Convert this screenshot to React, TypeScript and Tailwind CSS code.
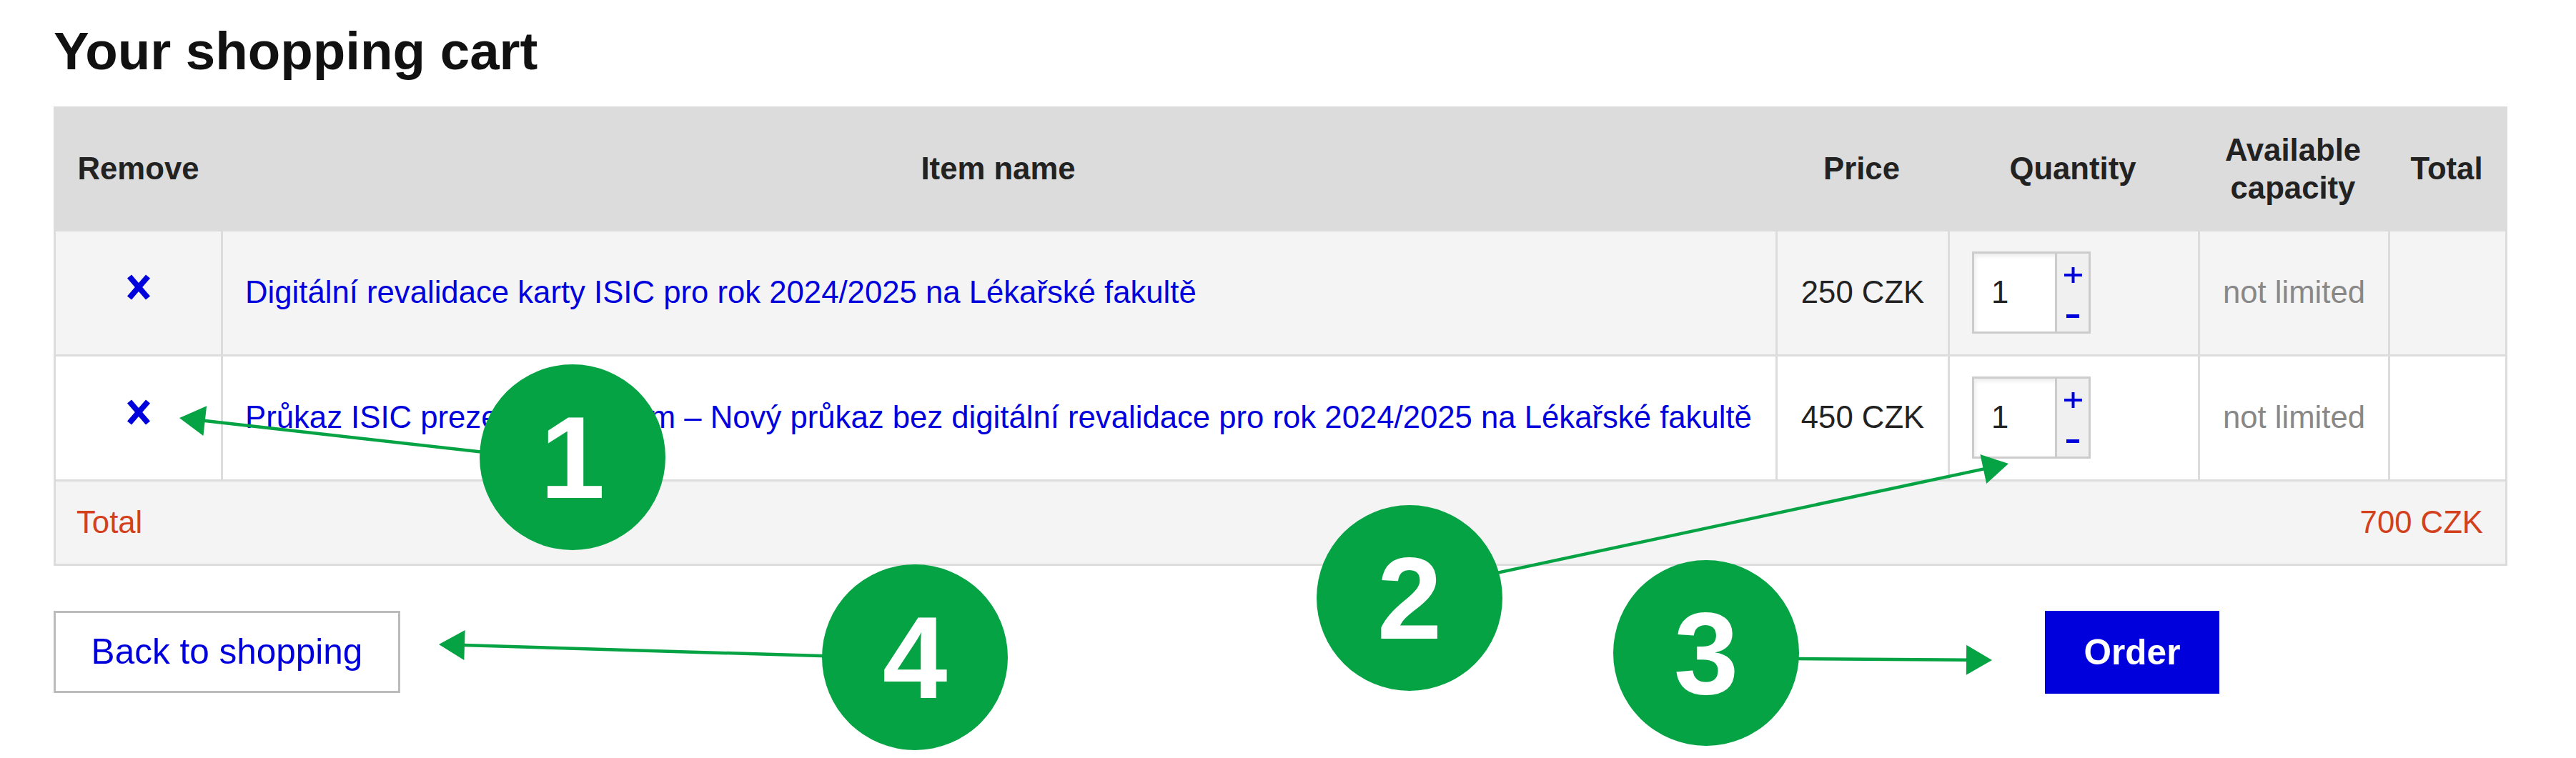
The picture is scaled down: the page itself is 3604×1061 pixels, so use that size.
import React from "react";

const GREEN = "#05a344";

type Pt = [number, number];

function arrowHead(tip: Pt, tail: Pt, len = 36, hw = 21) {
  const dx = tail[0] - tip[0];
  const dy = tail[1] - tip[1];
  const d = Math.hypot(dx, dy);
  const ux = dx / d;
  const uy = dy / d;
  const bx = tip[0] + ux * len;
  const by = tip[1] + uy * len;
  const px = -uy;
  const py = ux;
  return {
    points: `${tip[0]},${tip[1]} ${bx + px * hw},${by + py * hw} ${bx - px * hw},${by - py * hw}`,
    base: [bx + ux * -2, by + uy * -2] as Pt,
  };
}

const arrows: { tip: Pt; tail: Pt }[] = [
  { tip: [251, 585], tail: [801, 647] },
  { tip: [2810, 649], tail: [1972, 828] },
  { tip: [2787, 924], tail: [2387, 921] },
  { tip: [614, 902], tail: [1280, 922] },
];

const circles = [
  { cx: 801, cy: 640, n: "1" },
  { cx: 1972, cy: 837, n: "2" },
  { cx: 2387, cy: 914, n: "3" },
  { cx: 1280, cy: 920, n: "4" },
];

function RemoveX() {
  return (
    <svg width="36" height="38" viewBox="0 0 36 38" className="mb-[16px]">
      <line x1="5" y1="4" x2="31" y2="34" stroke="#0000dd" strokeWidth="8" />
      <line x1="31" y1="4" x2="5" y2="34" stroke="#0000dd" strokeWidth="8" />
    </svg>
  );
}

function QtyInput() {
  return (
    <div className="flex w-[166px] h-[115px] border-[3px] border-[#cccccc]">
      <div className="w-[113px] h-full bg-white shadow-[inset_2px_4px_5px_rgba(0,0,0,0.07)] flex items-center pl-[24px] text-[#222]">
        1
      </div>
      <div className="flex-1 border-l-[3px] border-[#cccccc] bg-[#f0f0f0] flex flex-col items-center justify-between pt-[19px] pb-[18px]">
        <svg width="25" height="22" viewBox="0 0 25 22">
          <rect x="10.5" y="0" width="4" height="22" fill="#0000dd" />
          <rect x="0" y="9" width="25" height="4" fill="#0000dd" />
        </svg>
        <svg width="22" height="7" viewBox="0 0 22 7">
          <rect x="2" y="1" width="18" height="5" fill="#0000dd" />
        </svg>
      </div>
    </div>
  );
}

const COLS = "grid grid-cols-[231px_2175px_241px_350px_266px_164px]";

function BodyRow({ bg, name, price }: { bg: string; name: string; price: string }) {
  return (
    <div className={`${COLS} h-[175px] border-t-[3px] border-[#dcdcdc] ${bg}`}>
      <div className="flex items-center justify-center">
        <RemoveX />
      </div>
      <div className="border-l-[3px] border-[#dcdcdc] flex items-center pl-[31px] whitespace-nowrap text-[#0000dd]">
        {name}
      </div>
      <div className="border-l-[3px] border-[#dcdcdc] flex items-center justify-center text-[#222]">
        {price}
      </div>
      <div className="border-l-[3px] border-[#dcdcdc] flex items-center pl-[31px]">
        <QtyInput />
      </div>
      <div className="border-l-[3px] border-[#dcdcdc] flex items-center justify-center text-[#888888]">
        not limited
      </div>
      <div className="border-l-[3px] border-[#dcdcdc]" />
    </div>
  );
}

export default function App() {
  return (
    <div className="relative w-[3604px] h-[1061px] overflow-hidden bg-white font-['Liberation_Sans',Arial,sans-serif] text-[43.7px] leading-[1.15]">
      <div className="pl-[75px] pt-[35px] w-[3508px]">
        <h1 className="text-[74.5px] font-bold leading-none text-[#111]">Your shopping cart</h1>

        <div className="mt-[39px] w-[3433px] border-[3px] border-[#dcdcdc]">
          <div className={`${COLS} h-[169px] bg-[#dcdcdc] font-bold text-[#222] text-center`}>
            <div className="flex items-center justify-center">Remove</div>
            <div className="flex items-center justify-center">Item name</div>
            <div className="flex items-center justify-center">Price</div>
            <div className="flex items-center justify-center">Quantity</div>
            <div className="flex items-center justify-center leading-[53px]">
              <span>
                Available
                <br />
                capacity
              </span>
            </div>
            <div className="flex items-center justify-center">Total</div>
          </div>

          <BodyRow
            bg="bg-[#f4f4f4]"
            name="Digitální revalidace karty ISIC pro rok 2024/2025 na Lékařské fakultě"
            price="250 CZK"
          />
          <BodyRow
            bg="bg-white"
            name="Průkaz ISIC prezenční studium – Nový průkaz bez digitální revalidace pro rok 2024/2025 na Lékařské fakultě"
            price="450 CZK"
          />

          <div className="h-[118px] border-t-[3px] border-[#dcdcdc] bg-[#f4f4f4] flex items-center justify-between pl-[29px] pr-[31px] text-[#d2401c]">
            <span>Total</span>
            <span>700 CZK</span>
          </div>
        </div>

        <div className="mt-[63px] flex items-start">
          <button className="w-[485px] h-[115px] border-[3px] border-[#bbbbbb] bg-white text-[#0000dd] text-[49.5px] leading-none flex items-center justify-center">
            Back to shopping
          </button>
          <button className="ml-[2301px] w-[244px] h-[116px] bg-[#0000dd] text-white font-bold text-[49.5px] leading-none flex items-center justify-center">
            Order
          </button>
        </div>
      </div>

      <svg
        className="absolute left-0 top-0 pointer-events-none"
        width="3604"
        height="1061"
        viewBox="0 0 3604 1061"
      >
        {arrows.map((a, i) => {
          const h = arrowHead(a.tip, a.tail);
          return (
            <g key={i}>
              <line
                x1={a.tail[0]}
                y1={a.tail[1]}
                x2={h.base[0]}
                y2={h.base[1]}
                stroke={GREEN}
                strokeWidth="4.5"
              />
              <polygon points={h.points} fill={GREEN} />
            </g>
          );
        })}
        {circles.map((c) => (
          <g key={c.n}>
            <circle cx={c.cx} cy={c.cy} r="130" fill={GREEN} />
            <text
              x={c.cx}
              y={c.cy + 57}
              textAnchor="middle"
              fill="#ffffff"
              fontSize="163"
              fontWeight="bold"
              fontFamily="'Liberation Sans', Arial, sans-serif"
            >
              {c.n}
            </text>
          </g>
        ))}
      </svg>
    </div>
  );
}
